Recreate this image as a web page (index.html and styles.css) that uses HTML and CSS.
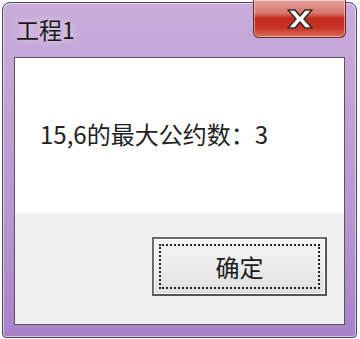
FILE: index.html
```html
<!DOCTYPE html>
<html lang="zh">
<head>
<meta charset="utf-8">
<link rel="stylesheet" href="styles.css">
</head>
<body>
<div class="window">
  <div class="titlebar">
    <div class="title">工程1</div>
    <div class="close">
      <svg width="34" height="24" viewBox="0 0 34 24">
        <path d="M5 3 L12 3 L17 9 L22 3 L29 3 L21 12 L29 21 L22 21 L17 15 L12 21 L5 21 L13 12 Z" fill="#ffffff" stroke="#3a2a2a" stroke-width="1.6" stroke-linejoin="round"/>
      </svg>
    </div>
  </div>
  <div class="client">
    <div class="message">15,6的最大公约数：3</div>
    <div class="actions">
      <div class="button"><span class="focus">确定</span></div>
    </div>
  </div>
</div>
</body>
</html>
```
FILE: styles.css
```css
html, body {
  margin: 0;
  padding: 0;
  background: #ffffff;
}
body {
  width: 360px;
  height: 339px;
  overflow: hidden;
  font-family: "Noto Sans CJK SC", "Noto Sans", sans-serif;
}
.window {
  box-sizing: border-box;
  margin: 2px 0 0 2px;
  width: 355px;
  height: 336px;
  border: 1px solid #4d4552;
  border-radius: 8px 8px 4px 4px;
  background: linear-gradient(to bottom, #c9acda 0%, #c4a6d8 20%, #b998d2 60%, #a982ca 100%);
  box-shadow: inset 0 0 0 1px rgba(255,255,255,0.55);
  padding: 0 11px 12px 11px;
  display: flex;
  flex-direction: column;
}
.titlebar {
  height: 54px;
  display: flex;
  align-items: flex-start;
  justify-content: space-between;
}
.title {
  font-size: 23px;
  color: #1a1a1a;
  margin-top: 11px;
  margin-left: 2px;
  line-height: 30px;
  text-shadow: 0 0 8px rgba(255,255,255,0.8);
}
.close {
  box-sizing: border-box;
  width: 93px;
  height: 38px;
  margin-top: -3px;
  margin-right: -1px;
  border: 1px solid #5a2a2a;
  border-top: none;
  border-radius: 0 0 6px 6px;
  background: linear-gradient(to bottom, #e4a09a 0%, #d8786e 35%, #c42a1c 50%, #c73426 75%, #db6a58 100%);
  box-shadow: inset 0 0 0 1px rgba(255,255,255,0.45);
  display: flex;
  align-items: center;
  justify-content: center;
}
.close svg { display: block; margin-top: 1px; }
.client {
  flex: 1;
  border: 1px solid #5a5460;
  background: #f0f0f0;
  display: flex;
  flex-direction: column;
}
.message {
  height: 155px;
  background: #ffffff;
  box-sizing: border-box;
  padding: 60px 0 0 25px;
  font-size: 24px;
  line-height: 32px;
  color: #222222;
}
.actions {
  flex: 1;
  display: flex;
  justify-content: flex-end;
  align-items: flex-start;
  padding: 24px 17px 0 0;
}
.button {
  box-sizing: border-box;
  width: 175px;
  height: 59px;
  border: 2px solid #6b6b6b;
  border-right-color: #555;
  border-bottom-color: #555;
  background: linear-gradient(to bottom, #f4f4f4 0%, #ececec 50%, #dedede 100%);
  box-shadow: inset 0 0 0 1px #ffffff;
  padding: 5px;
  display: flex;
}
.focus {
  flex: 1;
  border: 2px dotted #222;
  display: flex;
  align-items: center;
  justify-content: center;
  font-size: 24px;
  color: #1a1a1a;
}
```
